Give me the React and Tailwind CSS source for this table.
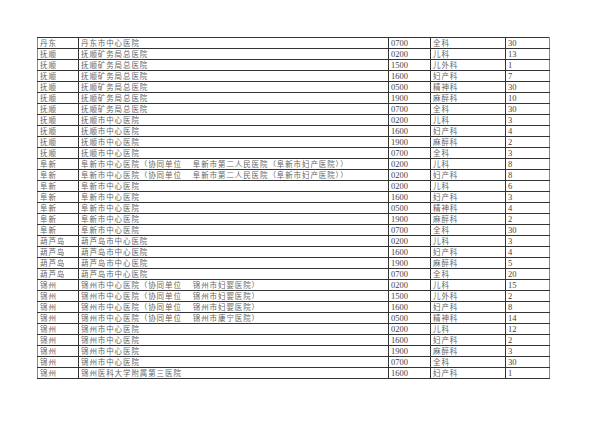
import React from "react";

const A = "阜新市中心医院（协同单位　 阜新市第二人民医院（阜新市妇产医院））";
const B = "锦州市中心医院（协同单位　 锦州市妇婴医院）";
const C = "锦州市中心医院（协同单位　 锦州市康宁医院）";

const rows = [
  ["丹东", "丹东市中心医院", "0700", "全科", "30"],
  ["抚顺", "抚顺矿务局总医院", "0200", "儿科", "13"],
  ["抚顺", "抚顺矿务局总医院", "1500", "儿外科", "1"],
  ["抚顺", "抚顺矿务局总医院", "1600", "妇产科", "7"],
  ["抚顺", "抚顺矿务局总医院", "0500", "精神科", "30"],
  ["抚顺", "抚顺矿务局总医院", "1900", "麻醉科", "10"],
  ["抚顺", "抚顺矿务局总医院", "0700", "全科", "30"],
  ["抚顺", "抚顺市中心医院", "0200", "儿科", "3"],
  ["抚顺", "抚顺市中心医院", "1600", "妇产科", "4"],
  ["抚顺", "抚顺市中心医院", "1900", "麻醉科", "2"],
  ["抚顺", "抚顺市中心医院", "0700", "全科", "3"],
  ["阜新", A, "0200", "儿科", "8"],
  ["阜新", A, "0200", "妇产科", "8"],
  ["阜新", "阜新市中心医院", "0200", "儿科", "6"],
  ["阜新", "阜新市中心医院", "1600", "妇产科", "3"],
  ["阜新", "阜新市中心医院", "0500", "精神科", "4"],
  ["阜新", "阜新市中心医院", "1900", "麻醉科", "2"],
  ["阜新", "阜新市中心医院", "0700", "全科", "30"],
  ["葫芦岛", "葫芦岛市中心医院", "0200", "儿科", "3"],
  ["葫芦岛", "葫芦岛市中心医院", "1600", "妇产科", "4"],
  ["葫芦岛", "葫芦岛市中心医院", "1900", "麻醉科", "5"],
  ["葫芦岛", "葫芦岛市中心医院", "0700", "全科", "20"],
  ["锦州", B, "0200", "儿科", "15"],
  ["锦州", B, "1500", "儿外科", "2"],
  ["锦州", B, "1600", "妇产科", "8"],
  ["锦州", C, "0500", "精神科", "14"],
  ["锦州", "锦州市中心医院", "0200", "儿科", "12"],
  ["锦州", "锦州市中心医院", "1600", "妇产科", "2"],
  ["锦州", "锦州市中心医院", "1900", "麻醉科", "3"],
  ["锦州", "锦州市中心医院", "0700", "全科", "30"],
  ["锦州", "锦州医科大学附属第三医院", "1600", "妇产科", "1"],
];

const cjk = "font-['Noto_Sans_CJK_SC',sans-serif] text-[7.5px] tracking-[0.9px] text-[#666]";
const num = "font-['Liberation_Serif',serif] text-[8.5px] text-[#444]";
const cell = "h-[11px] p-0 pl-[2px] leading-[10px] whitespace-pre overflow-hidden border border-[#333] align-middle";

export default function App() {
  return (
    <div className="w-[600px] h-[421px] bg-white pt-[37px] pl-[37px]">
      <table className="border-collapse table-fixed w-[512px] border-x border-[#888]">
        <colgroup>
          <col className="w-[41px]" />
          <col className="w-[310px]" />
          <col className="w-[42px]" />
          <col className="w-[75px]" />
          <col className="w-[44px]" />
        </colgroup>
        <tbody>
          {rows.map((r, i) => (
            <tr key={i} className="h-[11px]">
              <td className={`${cell} ${cjk} border-l-[#888]`}>{r[0]}</td>
              <td className={`${cell} ${cjk}`}>{r[1]}</td>
              <td className={`${cell} ${num}`}>{r[2]}</td>
              <td className={`${cell} ${cjk}`}>{r[3]}</td>
              <td className={`${cell} ${num} border-r-[#888]`}>{r[4]}</td>
            </tr>
          ))}
        </tbody>
      </table>
    </div>
  );
}
